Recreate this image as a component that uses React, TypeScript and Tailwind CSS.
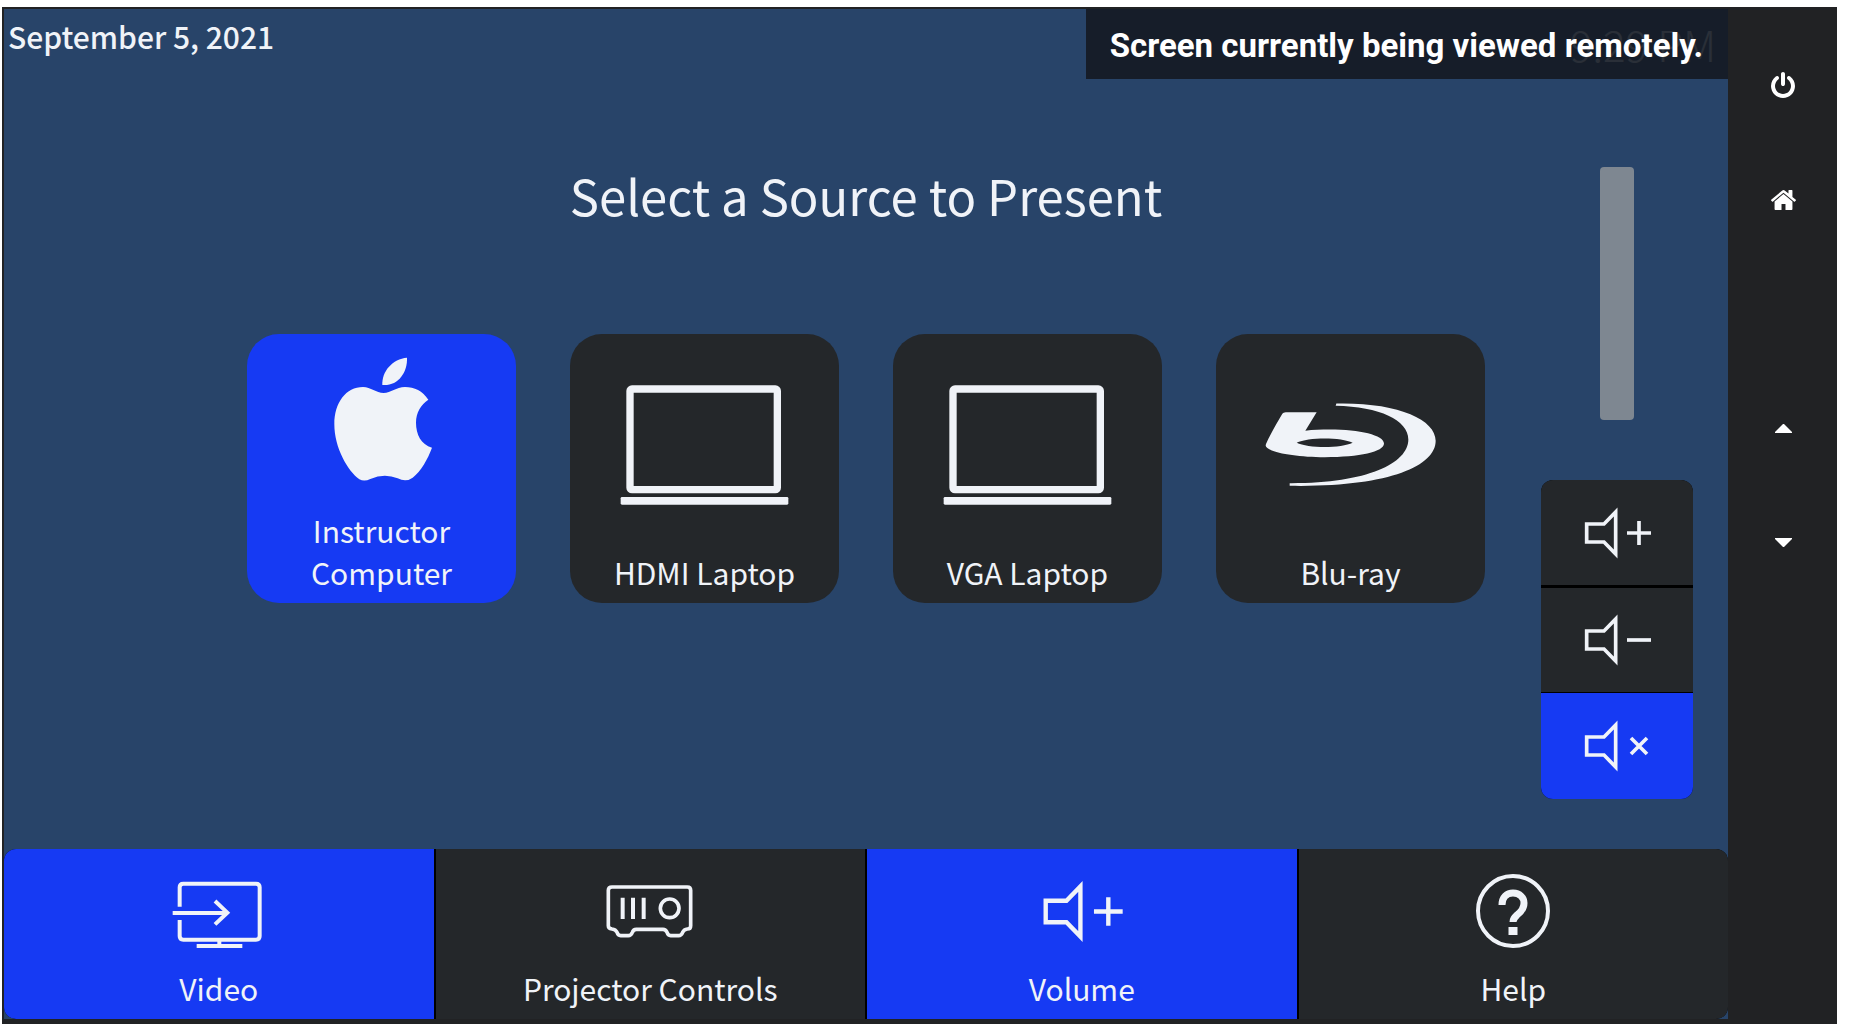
import { useState } from 'react';
import type { ReactNode } from 'react';
import clsx from 'clsx';

type SpeakerKind = 'up' | 'down' | 'mute';

const speakerMarks: Record<SpeakerKind, string> = {
    up: 'M135 84H207M171 48V120',
    down: 'M135 84H207',
    mute: 'M147 60L195 108M195 60L147 108',
};

function SpeakerIcon({ kind, className }: { kind: SpeakerKind; className: string }) {
    return (
        <svg viewBox="0 0 210 168" fill="none" stroke="currentColor" strokeWidth="11" className={className}>
            <path d="M14 57H66L101 21V147L66 111H14Z" />
            <path d={speakerMarks[kind]} strokeWidth="11" />
        </svg>
    );
}

function AppleIcon() {
    return (
        <svg viewBox="303 108 300 402" fill="currentColor" className="h-[134px] w-[100px]">
            <path d="M458 216C435 216 420 198 396 198C345 198 310 245 310 310C310 380 350 450 385 475Q400 483 418 474Q460 455 500 472Q525 485 545 470C570 450 590 415 603 380C570 370 555 340 555 305C555 275 570 250 592 236C575 210 550 198 522 198C495 198 480 216 458 216Z" />
            <path d="M454 192C452 150 485 114 528 110C530 155 500 196 454 192Z" />
        </svg>
    );
}

function LaptopIcon() {
    return (
        <svg viewBox="180 192 507 366" fill="none" stroke="currentColor" strokeWidth="22" className="h-[122px] w-[169px]">
            <rect x="210" y="207" width="442" height="302" rx="6" />
            <rect x="182" y="531" width="503" height="23" rx="4" fill="currentColor" stroke="none" />
        </svg>
    );
}

function BluRayIcon() {
    return (
        <svg viewBox="196 246 516 254" fill="currentColor" className="h-[85px] w-[172px]">
            <path
                fillRule="evenodd"
                d="M258 276H351L317 332C340 328 365 328 390 328C480 328 553 345 553 370C553 395 480 411 375 411C285 411 198 395 198 376C199 366 232 308 248 281Q251 276 258 276ZM291 368C325 351 425 351 459 368C425 385 325 385 291 368Z"
            />
            <path d="M410 250C590 246 708 296 708 362C708 440 560 502 270 497V489C500 490 626 430 626 358C626 300 540 260 408 257Z" />
        </svg>
    );
}

function VideoIcon() {
    return (
        <svg viewBox="516 129 282 228" fill="none" stroke="currentColor" strokeWidth="12" className="h-[76px] w-[94px]">
            <path d="M539 230V172Q539 161 550 161H768Q779 161 779 172V318Q779 329 768 329H550Q539 329 539 318V270" />
            <path d="M518 249H682M645 213L682 248L645 283M658 329V348M590 348H727" />
        </svg>
    );
}

function ProjectorIcon() {
    return (
        <svg viewBox="522 129 282 228" fill="none" stroke="currentColor" strokeWidth="11" className="h-[76px] w-[94px]">
            <path d="M549 171H775Q785 171 785 181V287Q785 297 775 297Q765 298 761 307Q757 317 749 317H725Q717 317 714 307Q710 298 702 298H622Q613 298 610 307Q606 317 598 317H575Q567 317 564 307Q560 298 549 297Q538 295 538 287V181Q538 171 549 171Z" />
            <path d="M581 203V267M612 203V267M644 203V267" strokeWidth="12" />
            <circle cx="722" cy="235" r="28" />
        </svg>
    );
}

function HelpIcon() {
    return (
        <svg viewBox="0 0 94 76" fill="none" stroke="currentColor" className="h-[76px] w-[94px]">
            <circle cx="47" cy="38" r="35" strokeWidth="4" />
            <path d="M36 32C36 24 41 20 47 20C54 20 58 25 58 30C58 36 55 39 51 42C48 45 47 46 47 49" strokeWidth="7" />
            <path d="M47 54V62" strokeWidth="9" />
        </svg>
    );
}

interface SourceTileProps {
    label: ReactNode;
    icon: ReactNode;
    active: boolean;
    onClick: () => void;
}

function SourceTile({ label, icon, active, onClick }: SourceTileProps) {
    return (
        <button
            type="button"
            aria-pressed={active}
            onClick={onClick}
            className={clsx(
                'flex h-[269px] w-[269px] flex-col rounded-[32px] pb-[10px] pt-1 text-[30px] leading-[42px]',
                active ? 'bg-[#163af3]' : 'bg-[#24272a]',
            )}
        >
            <span className="flex w-full flex-1 items-center justify-center">{icon}</span>
            <span className="w-full">{label}</span>
        </button>
    );
}

const sources = [
    { id: 'instructor', label: <>Instructor<br />Computer</>, icon: <AppleIcon /> },
    { id: 'hdmi', label: 'HDMI Laptop', icon: <LaptopIcon /> },
    { id: 'vga', label: 'VGA Laptop', icon: <LaptopIcon /> },
    { id: 'bluray', label: 'Blu-ray', icon: <BluRayIcon /> },
];

const navItems = [
    { label: 'Video', icon: <VideoIcon />, active: true },
    { label: 'Projector Controls', icon: <ProjectorIcon />, active: false },
    { label: 'Volume', icon: <SpeakerIcon kind="up" className="h-[67px] w-[84px]" />, active: true },
    { label: 'Help', icon: <HelpIcon />, active: false },
];

function VolumeControls() {
    const [level, setLevel] = useState(0);
    const [muted, setMuted] = useState(true);

    return (
        <div className="flex w-[152px] flex-col items-center gap-[60px]">
            <input
                type="range"
                aria-label="Volume level"
                value={level}
                onChange={(e) => setLevel(Number(e.target.value))}
                className="h-[253px] w-[34px] appearance-none rounded-sm bg-[#7e8791] [&::-webkit-slider-thumb]:h-0 [&::-webkit-slider-thumb]:w-0 [&::-webkit-slider-thumb]:appearance-none"
            />
            <div className="flex w-full flex-col overflow-hidden rounded-xl bg-black">
                <button
                    type="button"
                    aria-label="Volume up"
                    onClick={() => setLevel(level + 5)}
                    className="flex h-[105px] items-center justify-center bg-[#24272a]"
                >
                    <SpeakerIcon kind="up" className="h-[56px] w-[70px]" />
                </button>
                <button
                    type="button"
                    aria-label="Volume down"
                    onClick={() => setLevel(level - 5)}
                    className="flex h-[107px] items-center justify-center border-t-[3px] border-black bg-[#24272a]"
                >
                    <SpeakerIcon kind="down" className="h-[56px] w-[70px]" />
                </button>
                <button
                    type="button"
                    aria-label="Mute"
                    aria-pressed={muted}
                    onClick={() => setMuted(!muted)}
                    className={clsx(
                        'flex h-[107px] items-center justify-center border-t border-black',
                        muted ? 'bg-[#163af3]' : 'bg-[#24272a]',
                    )}
                >
                    <SpeakerIcon kind="mute" className="h-[56px] w-[70px]" />
                </button>
            </div>
        </div>
    );
}

function DeviceButtons() {
    return (
        <aside className="flex w-[109px] flex-col items-center pl-px text-white">
            <button type="button" aria-label="Power" className="flex h-[115px] w-full items-center justify-center pt-9">
                <svg viewBox="128 0 1536 1664" fill="currentColor" className="h-[26px] w-6">
                    <path d="M1664 896q0 156-61 298t-164 245-245 164-298 61-298-61-245-164-164-245-61-298q0-182 80.5-343t226.5-270q43-32 95.5-25t83.5 50q32 42 24.5 94.5t-49.5 84.5q-98 74-151.5 181t-53.5 228q0 104 40.5 198.5t109.5 163.5 163.5 109.5 198.5 40.5 198.5-40.5 163.5-109.5 109.5-163.5 40.5-198.5q0-121-53.5-228t-151.5-181q-42-32-49.5-84.5t24.5-94.5q31-43 84-50t95 25q146 109 226.5 270t80.5 343zm-640-768v640q0 52-38 90t-90 38-90-38-38-90v-640q0-52 38-90t90-38 90 38 38 90z" />
                </svg>
            </button>
            <button type="button" aria-label="Home" className="flex h-[115px] w-full items-center justify-center pt-9">
                <svg viewBox="90 250 1612 1290" fill="currentColor" className="h-5 w-[25px]">
                    <path d="M1472 992v480q0 26-19 45t-45 19h-384v-384h-256v384h-384q-26 0-45-19t-19-45v-480q0-1 .5-3t.5-3l575-474 575 474q1 2 1 6zm223-69l-62 74q-8 9-21 11h-3q-13 0-21-7l-692-577-692 577q-12 8-24 7-13-2-21-11l-62-74q-8-10-7-23.5t11-21.5l719-599q32-26 76-26t76 26l244 204v-195q0-14 9-23t23-9h192q14 0 23 9t9 23v408l219 182q10 8 11 21.5t-7 23.5z" />
                </svg>
            </button>
            <button type="button" aria-label="Up" className="mt-[114px] flex h-[115px] w-full items-center justify-center pt-9">
                <svg viewBox="0 0 17 9" fill="currentColor" className="h-[9px] w-[17px]">
                    <path d="M0 9V8L8 0H9L17 8V9Z" />
                </svg>
            </button>
            <button type="button" aria-label="Down" className="flex h-[112px] w-full items-center justify-center pt-9">
                <svg viewBox="0 0 17 9" fill="currentColor" className="h-[9px] w-[17px]">
                    <path d="M0 0V1L8 9H9L17 1V0Z" />
                </svg>
            </button>
        </aside>
    );
}

export default function App() {
    const [source, setSource] = useState('instructor');

    return (
        <div className="flex min-h-screen flex-col bg-white pl-[2px] pr-4 pt-[7px] font-['Noto_Sans_CJK_SC','Noto_Sans',sans-serif] text-[#f0f3f8]">
            <div className="flex flex-1 bg-[#212224] pb-[5px] pl-[2px] pt-[2px]">
                <div className="flex flex-1 flex-col bg-[#284469]">
                    <header className="relative flex h-[70px] items-start justify-between pl-1 pr-3">
                        <p className="pt-[6px] text-[30px] font-medium leading-[42px]">September 5, 2021</p>
                        <time className="text-[42px] font-light leading-[70px]">9:29 PM</time>
                        {/* Translucent, so the clock stays faintly visible underneath */}
                        <div
                            role="status"
                            className="absolute right-0 top-0 flex h-full items-center bg-[#141a22]/90 pl-6 pr-[25px] pt-1 font-[Roboto,sans-serif] text-[33px] font-bold text-white"
                        >
                            Screen currently being viewed remotely.
                        </div>
                    </header>

                    <main className="grid flex-1 grid-cols-[1fr_auto_1fr]">
                        <section className="col-start-2 flex flex-col items-center pt-[81px]">
                            <h1 className="text-[49px] leading-[70px]">Select a Source to Present</h1>
                            <div className="mt-[104px] flex gap-[54px]">
                                {sources.map((s) => (
                                    <SourceTile
                                        key={s.id}
                                        label={s.label}
                                        icon={s.icon}
                                        active={s.id === source}
                                        onClick={() => setSource(s.id)}
                                    />
                                ))}
                            </div>
                        </section>
                        <div className="flex justify-end pr-[35px] pt-[88px]">
                            <VolumeControls />
                        </div>
                    </main>

                    <nav className="grid grid-cols-4 gap-[2px] overflow-hidden rounded-xl bg-black">
                        {navItems.map((item) => (
                            <button
                                key={item.label}
                                type="button"
                                className={clsx(
                                    'flex h-[170px] flex-col items-center pb-[10px] pt-[6px] text-[30px] leading-[42px]',
                                    item.active ? 'bg-[#163af3]' : 'bg-[#24272a]',
                                )}
                            >
                                <span className="flex flex-1 items-center">{item.icon}</span>
                                {item.label}
                            </button>
                        ))}
                    </nav>
                </div>
                <DeviceButtons />
            </div>
        </div>
    );
}
